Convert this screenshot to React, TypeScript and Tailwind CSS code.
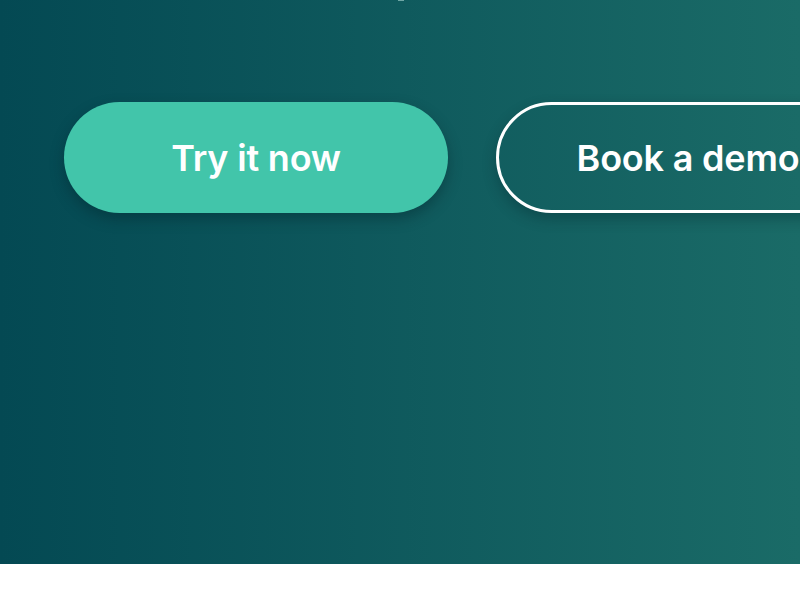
import React from "react";

export default function App() {
  return (
    <div className="w-[800px] h-[600px] bg-white overflow-hidden" style={{ fontFamily: "Inter, 'Noto Sans', sans-serif" }}>
      <section className="relative h-[564px] bg-gradient-to-r from-[#044953] to-[#1a6b67] overflow-hidden">
        <div className="absolute left-[398px] top-0 h-[1px] w-[6px] bg-[#6fa7a5]" />
        <div className="flex gap-[48px] pl-[64px] pt-[102px]">
          <button className="shrink-0 w-[384px] h-[111px] rounded-full bg-[#42c5aa] text-white text-[36px] font-semibold tracking-[-0.2px] shadow-[0_6px_14px_rgba(0,30,35,0.35)]">
            Try it now
          </button>
          <button className="shrink-0 w-[384px] h-[111px] rounded-full border-[3px] border-white text-white text-[36px] font-semibold tracking-[-0.2px] shadow-[0_6px_14px_rgba(0,30,35,0.3)]">
            Book a demo
          </button>
        </div>
      </section>
    </div>
  );
}
